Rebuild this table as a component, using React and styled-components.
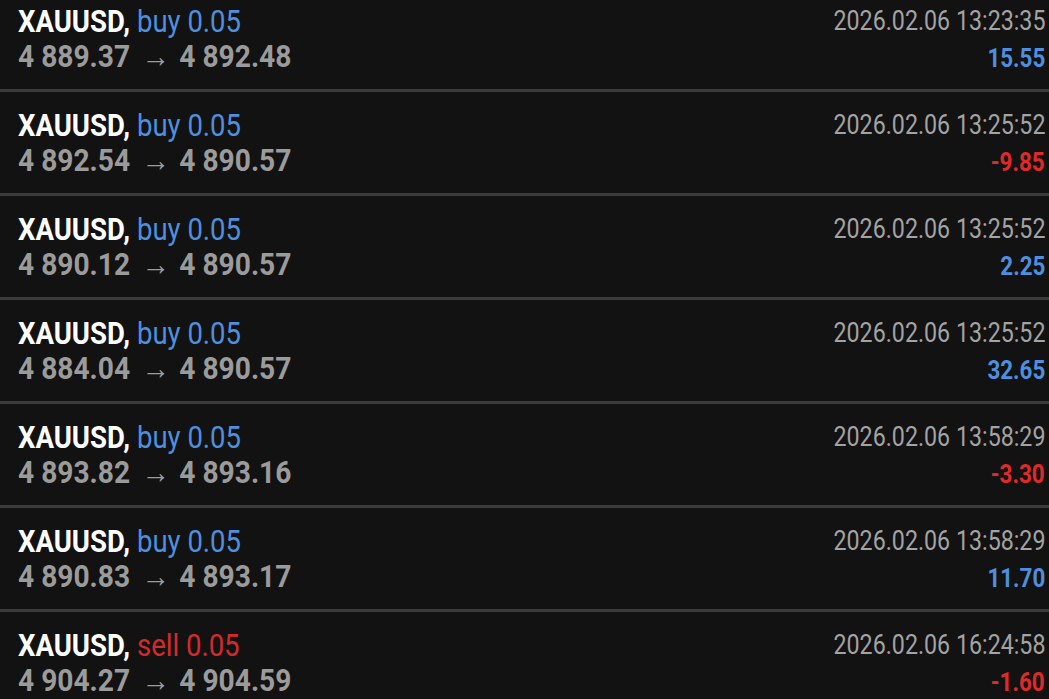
import React from "react";
import styled, { createGlobalStyle } from "styled-components";

const Global = createGlobalStyle`
  html, body { margin: 0; padding: 0; background: #121212; overflow: hidden; }
  body { font-family: Roboto, "Noto Sans", sans-serif; }
`;

const List = styled.div`
  width: 1049px;
  height: 699px;
  overflow: hidden;
  background: #121212;
`;

const Inner = styled.div`
  margin-top: -12px;
`;

const Row = styled.div`
  box-sizing: border-box;
  height: 104px;
  border-bottom: 3px solid #3b3b3b;
  display: flex;
  justify-content: space-between;
  align-items: flex-start;
  padding: 16px 4px 0 18px;
`;

const Col = styled.div`
  display: flex;
  flex-direction: column;
  align-items: ${(p) => (p.$right ? "flex-end" : "flex-start")};
`;

const Line = styled.div`
  display: inline-block;
  white-space: nowrap;
  line-height: 35px;
  height: 35px;
  transform: scaleX(${(p) => p.$scale || 0.86});
  transform-origin: ${(p) => (p.$right ? "right" : "left")} center;
`;

const ProfitLine = styled(Line)`
  margin-top: 2px;
`;

const Symbol = styled.span`
  color: #ffffff;
  font-weight: 700;
  font-size: 32px;
`;

const Side = styled.span`
  color: ${(p) => (p.$sell ? "#d42a2a" : "#4f8fdf")};
  font-weight: 400;
  font-size: 32px;
  margin-left: 4px;
`;

const Prices = styled.span`
  color: #9b9b9b;
  font-weight: 700;
  font-size: 32px;
`;

const Arrow = styled.span`
  font-weight: 400;
  margin: 0 3px 0 5px;
`;

const DateText = styled.span`
  color: #a3a3a3;
  font-weight: 400;
  font-size: 27px;
`;

const Profit = styled.span`
  color: ${(p) => (p.$neg ? "#e02a2a" : "#4f8fdf")};
  font-weight: 700;
  font-size: 26px;
`;

const trades = [
  { side: "buy", open: "4 889.37", close: "4 892.48", time: "2026.02.06 13:23:35", profit: "15.55" },
  { side: "buy", open: "4 892.54", close: "4 890.57", time: "2026.02.06 13:25:52", profit: "-9.85" },
  { side: "buy", open: "4 890.12", close: "4 890.57", time: "2026.02.06 13:25:52", profit: "2.25" },
  { side: "buy", open: "4 884.04", close: "4 890.57", time: "2026.02.06 13:25:52", profit: "32.65" },
  { side: "buy", open: "4 893.82", close: "4 893.16", time: "2026.02.06 13:58:29", profit: "-3.30" },
  { side: "buy", open: "4 890.83", close: "4 893.17", time: "2026.02.06 13:58:29", profit: "11.70" },
  { side: "sell", open: "4 904.27", close: "4 904.59", time: "2026.02.06 16:24:58", profit: "-1.60" },
];

export default function App() {
  return (
    <>
      <Global />
      <List>
        <Inner>
          {trades.map((t, i) => (
            <Row key={i}>
              <Col>
                <Line>
                  <Symbol>XAUUSD,</Symbol> <Side $sell={t.side === "sell"}>{t.side} 0.05</Side>
                </Line>
                <Line $scale={0.88}>
                  <Prices>
                    {t.open} <Arrow>→</Arrow> {t.close}
                  </Prices>
                </Line>
              </Col>
              <Col $right>
                <Line $right>
                  <DateText>{t.time}</DateText>
                </Line>
                <ProfitLine $right>
                  <Profit $neg={t.profit.startsWith("-")}>{t.profit}</Profit>
                </ProfitLine>
              </Col>
            </Row>
          ))}
        </Inner>
      </List>
    </>
  );
}
